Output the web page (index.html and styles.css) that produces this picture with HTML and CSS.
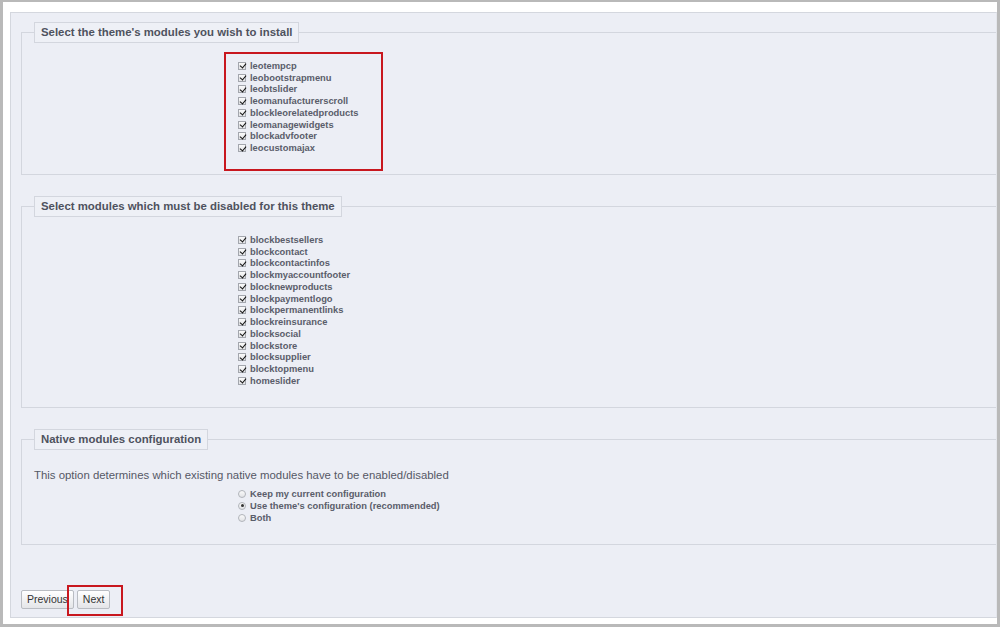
FILE: index.html
```html
<!DOCTYPE html>
<html lang="en">
<head>
  <meta charset="UTF-8">
  <title>Theme modules</title>
  <link rel="stylesheet" href="styles.css">
</head>
<body>

  <div class="frame">
    <div class="panel">

      <fieldset class="group">
        <legend>Select the theme's modules you wish to install</legend>
        <ul class="options">
          <li class="callout-box"></li>
          <li><span class="check"></span>leotempcp</li>
          <li><span class="check"></span>leobootstrapmenu</li>
          <li><span class="check"></span>leobtslider</li>
          <li><span class="check"></span>leomanufacturerscroll</li>
          <li><span class="check"></span>blockleorelatedproducts</li>
          <li><span class="check"></span>leomanagewidgets</li>
          <li><span class="check"></span>blockadvfooter</li>
          <li><span class="check"></span>leocustomajax</li>
        </ul>
      </fieldset>

      <fieldset class="group">
        <legend>Select modules which must be disabled for this theme</legend>
        <ul class="options">
          <li><span class="check"></span>blockbestsellers</li>
          <li><span class="check"></span>blockcontact</li>
          <li><span class="check"></span>blockcontactinfos</li>
          <li><span class="check"></span>blockmyaccountfooter</li>
          <li><span class="check"></span>blocknewproducts</li>
          <li><span class="check"></span>blockpaymentlogo</li>
          <li><span class="check"></span>blockpermanentlinks</li>
          <li><span class="check"></span>blockreinsurance</li>
          <li><span class="check"></span>blocksocial</li>
          <li><span class="check"></span>blockstore</li>
          <li><span class="check"></span>blocksupplier</li>
          <li><span class="check"></span>blocktopmenu</li>
          <li><span class="check"></span>homeslider</li>
        </ul>
      </fieldset>

      <fieldset class="group">
        <legend>Native modules configuration</legend>
        <p class="hint">This option determines which existing native modules have to be enabled/disabled</p>
        <ul class="options radios">
          <li><span class="radio"></span>Keep my current configuration</li>
          <li><span class="radio selected"></span>Use theme's configuration (recommended)</li>
          <li><span class="radio"></span>Both</li>
        </ul>
      </fieldset>

      <div class="actions">
        <button type="button" class="btn">Previous</button>
        <button type="button" class="btn next">Next</button>
      </div>

    </div>
  </div>

</body>
</html>
```

FILE: styles.css
```css
/* General Reset */
*,
*::after {
  margin: 0;
  padding: 0;
  box-sizing: border-box;
}

body {
  font-family: "Liberation Sans", Arial, sans-serif;
  background-color: #fff;
  width: 1000px;
  height: 627px;
  overflow: hidden;
}

.frame {
  height: 627px;
  border: 3px solid #b9b9b9;
  border-top-width: 2px;
  padding: 10px 0 6px 7px;
  display: flex;
  flex-direction: column;
  overflow: hidden;
}

.panel {
  flex: 1;
  background-color: #eceef5;
  border: 1px solid #d4d7de;
  border-right: 1px solid #e4e6ec;
  padding: 9px 0 0 10px;
  overflow-x: clip;
}

.group {
  display: block;
  width: calc(100% + 40px);
  border: 1px solid #d3d6de;
  margin: 0 0 21px 0;
  padding: 0 12px 20px;
  min-width: 0;
}

.group legend {
  border: 1px solid #d3d6de;
  background-color: #eef0f6;
  padding: 0 6px;
  font-size: 11.4px;
  font-weight: bold;
  line-height: 19px;
  color: #4e525e;
}

.options {
  list-style: none;
  margin: 17px 0 0 204px;
  position: relative;
}

.options li {
  display: flex;
  align-items: center;
  height: 11.75px;
  font-size: 9.35px;
  font-weight: bold;
  color: #5a5d6a;
}

.check,
.radio {
  width: 8px;
  height: 8px;
  margin-right: 4px;
  border: 1px solid #a3a6ad;
  background: linear-gradient(#fafafa, #e2e3e6);
  position: relative;
  flex-shrink: 0;
}

.check::after {
  content: "";
  position: absolute;
  left: 1.5px;
  top: -0.5px;
  width: 4px;
  height: 6px;
  border: solid #111;
  border-width: 0 1.6px 1.6px 0;
  transform: rotate(40deg);
}

.radio {
  border-radius: 50%;
  border-color: #b1b4ba;
}

.radio.selected::after {
  content: "";
  position: absolute;
  left: 1.5px;
  top: 1.5px;
  width: 3px;
  height: 3px;
  border-radius: 50%;
  background-color: #333;
}

/* red annotation frames */
.options li.callout-box {
  position: absolute;
  top: -8px;
  left: -14px;
  width: 159px;
  height: 119px;
  border: 2px solid #c8171e;
}

.hint {
  margin-top: 18px;
  font-size: 11.4px;
  line-height: 14px;
  color: #555865;
}

.radios {
  margin-top: 6px;
}

.radios li {
  height: 12px;
}

.actions {
  display: flex;
  gap: 3px;
  margin-top: 45px;
}

.btn {
  font-family: "Liberation Sans", Arial, sans-serif;
  font-size: 10.5px;
  color: #333;
  height: 19px;
  padding: 0 5px;
  border: 1px solid #b9bcc2;
  border-radius: 2px;
  background: linear-gradient(#ffffff, #e4e5e8);
  cursor: pointer;
}

.btn.next {
  position: relative;
  overflow: visible;
}

.btn.next::after {
  content: "";
  position: absolute;
  left: -11px;
  top: -6px;
  width: 56px;
  height: 31px;
  border: 2px solid #c8171e;
}
```
